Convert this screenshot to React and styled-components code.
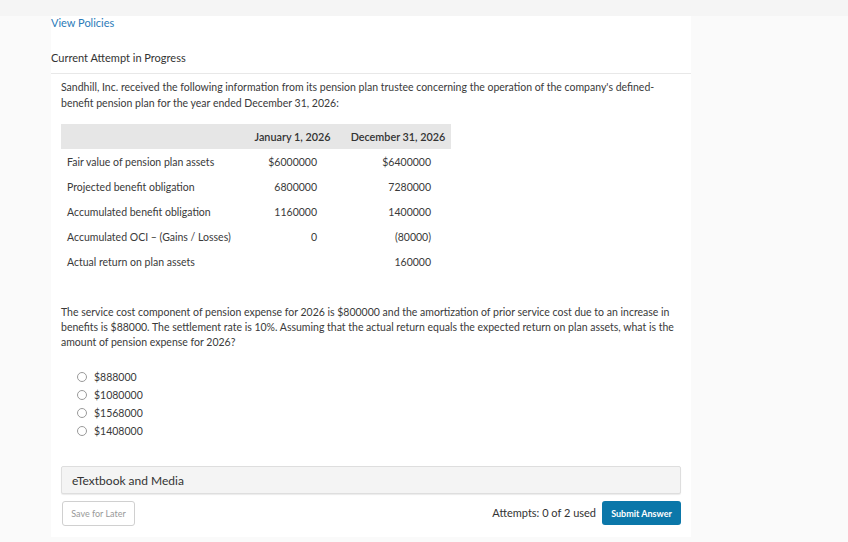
import styled, { createGlobalStyle } from "styled-components";

const GlobalStyle = createGlobalStyle`
  body {
    margin: 0;
    background: #fafafa;
    font-family: Lato, "Open Sans", sans-serif;
    color: #333;
  }
`;

const rows = [
    { label: "Fair value of pension plan assets", start: "$6000000", end: "$6400000" },
    { label: "Projected benefit obligation", start: "6800000", end: "7280000" },
    { label: "Accumulated benefit obligation", start: "1160000", end: "1400000" },
    { label: "Accumulated OCI \u2013 (Gains / Losses)", start: "0", end: "(80000)" },
    { label: "Actual return on plan assets", start: "", end: "160000" },
];

const options = ["$888000", "$1080000", "$1568000", "$1408000"];

const App = () => {
    return (
        <>
            <GlobalStyle />
            <TopBand />
            <Card>
                <PolicyLink href="#">View Policies</PolicyLink>
                <AttemptHeader>Current Attempt in Progress</AttemptHeader>
                <Body>
                    <Intro>
                        Sandhill, Inc. received the following information from its pension plan trustee concerning the operation of the company's defined-benefit pension plan for the year ended December 31, 2026:
                    </Intro>

                    <DataTable>
                        <colgroup>
                            <col style={{ width: 179 }} />
                            <col style={{ width: 105 }} />
                            <col style={{ width: 106 }} />
                        </colgroup>
                        <thead>
                            <tr>
                                <HeadCell />
                                <HeadCell>January 1, 2026</HeadCell>
                                <HeadCell>December 31, 2026</HeadCell>
                            </tr>
                        </thead>
                        <tbody>
                            {rows.map((row) => (
                                <tr key={row.label}>
                                    <LabelCell>{row.label}</LabelCell>
                                    <ValueCell $pad={28}>{row.start}</ValueCell>
                                    <ValueCell $pad={20}>{row.end}</ValueCell>
                                </tr>
                            ))}
                        </tbody>
                    </DataTable>

                    <Question>
                        The service cost component of pension expense for 2026 is $800000 and the amortization of prior service cost due to an increase in benefits is $88000. The settlement rate is 10%. Assuming that the actual return equals the expected return on plan assets, what is the amount of pension expense for 2026?
                    </Question>

                    <OptionList>
                        {options.map((opt) => (
                            <Option key={opt}>
                                <Radio />
                                {opt}
                            </Option>
                        ))}
                    </OptionList>

                    <MediaBar>eTextbook and Media</MediaBar>

                    <Footer>
                        <SaveButton>Save for Later</SaveButton>
                        <Actions>
                            <Attempts>Attempts: 0 of 2 used</Attempts>
                            <SubmitButton>Submit Answer</SubmitButton>
                        </Actions>
                    </Footer>
                </Body>
            </Card>
        </>
    );
};

export default App;

const TopBand = styled.div`
    height: 16px;
    background: #f5f5f5;
`;

const Card = styled.div`
    margin-left: 51px;
    width: 640px;
    background: #fff;
    padding-bottom: 11px;
`;

const PolicyLink = styled.a`
    display: block;
    font-size: 11px;
    line-height: 14px;
    color: #2b7bb9;
    text-decoration: none;
`;

const AttemptHeader = styled.div`
    margin-top: 21px;
    padding-bottom: 8px;
    border-bottom: 1px solid #e8e8e8;
    font-size: 11px;
    line-height: 14px;
    color: #333;
`;

const Body = styled.div`
    padding: 0 10px;
`;

const Intro = styled.p`
    margin: 5px 0 0;
    font-size: 10.5px;
    line-height: 16px;
    color: #3a3a3a;
`;

const DataTable = styled.table`
    margin-top: 13px;
    width: 390px;
    table-layout: fixed;
    border-collapse: collapse;
    font-size: 10.5px;
    color: #3a3a3a;
`;

const HeadCell = styled.th`
    height: 25px;
    padding: 0;
    background: #e6e6e6;
    font-weight: 600;
    font-size: 10.8px;
    text-align: center;
    white-space: nowrap;
    color: #333;
`;

const LabelCell = styled.td`
    height: 25px;
    padding: 0 6px;
    text-align: left;
    white-space: nowrap;
`;

const ValueCell = styled.td`
    height: 25px;
    padding: 0 ${(p) => p.$pad}px 0 0;
    text-align: right;
`;

const Question = styled.p`
    margin: 31px 0 0;
    font-size: 10.5px;
    line-height: 15px;
    color: #3a3a3a;
`;

const OptionList = styled.div`
    margin-top: 18px;
    padding-left: 16px;
    display: flex;
    flex-direction: column;
`;

const Option = styled.label`
    display: flex;
    align-items: center;
    gap: 7px;
    height: 18px;
    font-size: 10.5px;
    color: #3a3a3a;
`;

const Radio = styled.span`
    width: 8px;
    height: 8px;
    border: 1px solid #9a9a9a;
    border-radius: 50%;
    background: #fff;
`;

const MediaBar = styled.div`
    margin-top: 26px;
    height: 26px;
    padding-left: 10px;
    display: flex;
    align-items: center;
    background: #f4f4f4;
    border: 1px solid #dedede;
    border-radius: 2px;
    box-shadow: 0 1px 1px rgba(0, 0, 0, 0.08);
    font-size: 12px;
    color: #333;
`;

const Footer = styled.div`
    margin-top: 7px;
    display: flex;
    justify-content: space-between;
    align-items: flex-start;
`;

const SaveButton = styled.button`
    margin-left: 1px;
    width: 73px;
    height: 25px;
    padding: 0;
    background: #fff;
    border: 1px solid #d0d0d0;
    border-radius: 3px;
    font-family: Lato, sans-serif;
    font-size: 9px;
    color: #999;
`;

const Actions = styled.div`
    display: flex;
    align-items: center;
    gap: 6px;
`;

const Attempts = styled.span`
    font-size: 11px;
    color: #333;
    margin-top: -2px;
`;

const SubmitButton = styled.button`
    width: 79px;
    height: 24px;
    padding: 0;
    background: #0b77a9;
    border: none;
    border-radius: 3px;
    font-family: Lato, sans-serif;
    font-weight: 700;
    font-size: 9px;
    color: #fff;
`;
